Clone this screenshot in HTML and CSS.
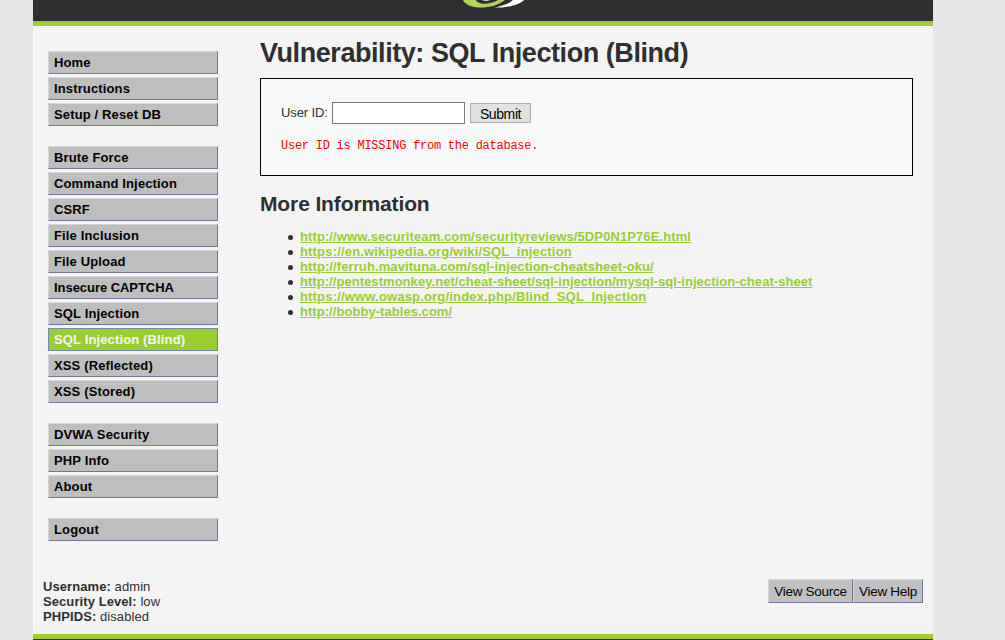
FILE: index.html
```html
<!DOCTYPE html>
<html lang="en">
<head>
<meta charset="utf-8">
<title>Vulnerability: SQL Injection (Blind)</title>
<link rel="stylesheet" href="styles.css">
</head>
<body>
<div class="container">
  <header class="header">
    <svg class="logo" width="90" height="21" viewBox="0 0 90 21">
      <path d="M23 0C27 10 53 10 65 0H58C50 5 38 5 36 0Z" fill="#b1d35b"/>
      <path d="M42 0Q46 2 50 0Z" fill="#ddd"/>
      <path d="M55 7.500C67 8 79 5 84 0H73C69 4 62 6 55 7.500Z" fill="#fff"/>
    </svg>
  </header>
  <div class="body">
    <nav class="menu">
      <ul>
        <li>Home</li>
        <li>Instructions</li>
        <li>Setup / Reset DB</li>
      </ul>
      <ul>
        <li>Brute Force</li>
        <li>Command Injection</li>
        <li>CSRF</li>
        <li>File Inclusion</li>
        <li>File Upload</li>
        <li class="plain">Insecure CAPTCHA</li>
        <li>SQL Injection</li>
        <li class="selected">SQL Injection (Blind)</li>
        <li>XSS (Reflected)</li>
        <li>XSS (Stored)</li>
      </ul>
      <ul>
        <li>DVWA Security</li>
        <li>PHP Info</li>
        <li>About</li>
      </ul>
      <ul>
        <li>Logout</li>
      </ul>
    </nav>
    <main class="main">
      <h1>Vulnerability: SQL Injection (Blind)</h1>
      <section class="vulnerable">
        <form class="form">
          <label for="uid">User ID:</label>
          <input id="uid" class="field" type="text">
          <button class="submit" type="button">Submit</button>
        </form>
        <pre class="message">User ID is MISSING from the database.</pre>
      </section>
      <h2>More Information</h2>
      <ul class="links">
        <li><a href="#">http://www.securiteam.com/securityreviews/5DP0N1P76E.html</a></li>
        <li><a class="wide" href="#">https://en.wikipedia.org/wiki/SQL_injection</a></li>
        <li><a href="#">http://ferruh.mavituna.com/sql-injection-cheatsheet-oku/</a></li>
        <li><a class="tight" href="#">http://pentestmonkey.net/cheat-sheet/sql-injection/mysql-sql-injection-cheat-sheet</a></li>
        <li><a class="wide" href="#">https://www.owasp.org/index.php/Blind_SQL_Injection</a></li>
        <li><a class="tight" href="#">http://bobby-tables.com/</a></li>
      </ul>
    </main>
  </div>
  <div class="system">
    <div class="info">
      <div><b>Username:</b> admin</div>
      <div><b>Security Level:</b> low</div>
      <div><b>PHPIDS:</b> disabled</div>
    </div>
    <div class="actions"><button class="source" type="button">View Source</button><button class="help" type="button">View Help</button></div>
  </div>
  <footer class="footer"></footer>
</div>
</body>
</html>
```
FILE: styles.css
```css
* { box-sizing: border-box; }
body {
  margin: 0;
  height: 640px;
  overflow: hidden;
  background: #e7e7e7;
  color: #2f2f2f;
  font: 13px/15px "Liberation Sans", Arial, sans-serif;
}
.container {
  width: 900px;
  height: 640px;
  margin-left: 33px;
  background: #f4f4f4;
  display: flex;
  flex-direction: column;
}
.header {
  height: 26px;
  flex: none;
  background: #2f2f2f;
  border-bottom: 5px solid #a1cc33;
}
.logo { display: block; margin-left: 407px; }
.body { display: flex; height: 550px; flex: none; }
.menu { width: 227px; padding: 25px 42px 0 15px; }
.menu ul { list-style: none; margin: 0 0 20px; padding: 0; display: grid; gap: 3px; }
.menu li {
  height: 23px;
  padding: 3px 5px;
  background: #bebebe;
  border: 1px solid;
  border-color: #d4d4d4 #6f7a92 #6f7a92 #d4d4d4;
  color: #000;
  font-weight: bold;
  letter-spacing: 0.14px;
}
.menu li.plain { letter-spacing: -0.05px; }
.menu li.selected { background: #9acd32; border-color: #7189a8; color: #f4f4f4; }
.main { width: 653px; padding-top: 12px; }
h1 { margin: 0 0 10px; font-size: 27px; line-height: 30px; letter-spacing: -0.44px; white-space: nowrap; }
.vulnerable {
  height: 98px;
  padding: 23px 20px 0;
  background: #f8fafa;
  border: 1px solid #000;
}
.form { display: flex; align-items: center; height: 22px; }
.form label { width: 51px; padding-bottom: 2px; letter-spacing: -0.1px; white-space: nowrap; }
.field { width: 133px; height: 22px; border: 1px solid #7a7a7a; background: #fff; padding: 1px; }
.submit {
  width: 61px;
  height: 20px;
  margin-left: 5px;
  padding: 1px 0 0;
  border: 1px solid #adadad;
  background: #e1e1e1;
  color: #000;
  font: 14px/16px "Liberation Sans", Arial, sans-serif;
  letter-spacing: -0.4px;
}
.message {
  margin: 13px 0 0;
  color: #f00;
  font: 12px/18px "Liberation Mono", monospace;
  letter-spacing: -0.25px;
}
h2 { margin: 14px 0 13px; font-size: 21px; line-height: 24px; letter-spacing: -0.12px; }
.vulnerable + h2 { margin-top: 16px; }
.links { margin: 0; padding-left: 28px; list-style: none; }
.links li { display: flex; align-items: center; gap: 7px; }
.links li::before { content: ""; width: 5px; height: 5px; margin-top: 1px; border-radius: 50%; background: #2f2f2f; }
.links a { color: #9acd32; font-weight: bold; letter-spacing: 0.1px; white-space: nowrap; }
.links a.wide { letter-spacing: 0.175px; }
.links a.tight { letter-spacing: 0.05px; }
.system { display: flex; justify-content: space-between; height: 58px; padding: 3px 10px 0; flex: none; }
.info { letter-spacing: 0.08px; }
.actions { display: flex; }
.actions button {
  height: 24px;
  padding: 1px 0 0;
  background: #c0c0c0;
  border: 1px solid;
  border-color: #d4d4d4 #6f7a92 #6f7a92 #d4d4d4;
  color: #000;
  font: 13.5px/16px "Liberation Sans", Arial, sans-serif;
  letter-spacing: -0.27px;
  white-space: nowrap;
}
.actions .source { width: 85px; }
.actions .help { width: 70px; }
.footer { height: 6px; flex: none; background: #2f2f2f; border-top: 5px solid #a1cc33; }
```
